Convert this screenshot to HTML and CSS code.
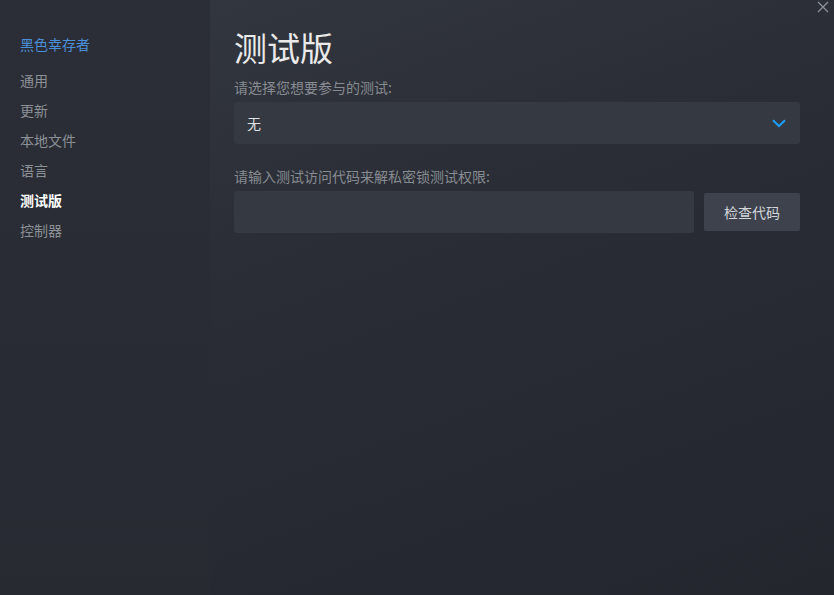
FILE: index.html
```html
<!DOCTYPE html>
<html lang="zh-CN">
<head>
<meta charset="utf-8">
<title>测试版</title>
<link rel="stylesheet" href="styles.css">
</head>
<body>
<div class="window">
  <nav class="sidebar">
    <div class="game-title">黑色幸存者</div>
    <ul class="menu">
      <li class="menu-item">通用</li>
      <li class="menu-item">更新</li>
      <li class="menu-item">本地文件</li>
      <li class="menu-item">语言</li>
      <li class="menu-item active">测试版</li>
      <li class="menu-item">控制器</li>
    </ul>
  </nav>
  <main class="content">
    <h1 class="title">测试版</h1>
    <div class="label">请选择您想要参与的测试:</div>
    <div class="select">
      <span class="select-value">无</span>
      <svg class="chevron" width="14" height="9" viewBox="0 0 14 9"><path d="M1 1.2 L7 7 L13 1.2" fill="none" stroke="#1a9fff" stroke-width="2"/></svg>
    </div>
    <div class="label label-code">请输入测试访问代码来解私密锁测试权限:</div>
    <div class="code-row">
      <div class="code-input"></div>
      <button class="check-btn">检查代码</button>
    </div>
  </main>
  <button class="close" aria-label="关闭">
    <svg width="12" height="12" viewBox="0 0 12 12"><path d="M1 1 L11 11 M11 1 L1 11" stroke="#8b929a" stroke-width="1.3" fill="none"/></svg>
  </button>
</div>
</body>
</html>
```

FILE: styles.css
```css
html, body {
  margin: 0;
  padding: 0;
  height: 100%;
}
body {
  font-family: "Noto Sans CJK SC", "Noto Sans", sans-serif;
  background: #25282f;
}
.window {
  position: relative;
  display: flex;
  width: 834px;
  height: 595px;
  overflow: hidden;
}
.sidebar {
  width: 210px;
  flex: none;
  background: linear-gradient(180deg, #2b2e36 0%, #272a31 100%);
  padding: 33px 0 0 20px;
  box-sizing: border-box;
}
.game-title {
  color: #4a8fd8;
  font-size: 14px;
  line-height: 22px;
  margin-bottom: 14px;
}
.menu {
  list-style: none;
  margin: 0;
  padding: 0;
  display: flex;
  flex-direction: column;
  gap: 8px;
}
.menu-item {
  color: #8c9097;
  font-size: 14px;
  line-height: 22px;
}
.menu-item.active {
  color: #ffffff;
  font-weight: bold;
}
.content {
  flex: 1;
  background: linear-gradient(160deg, #32363e 0%, #2a2d35 35%, #23262d 100%);
  padding: 24px 34px 0 24px;
  box-sizing: border-box;
}
.title {
  margin: 0;
  font-size: 33px;
  font-weight: normal;
  line-height: 46px;
  color: #eaeaea;
}
.label {
  color: #878b92;
  font-size: 14px;
  line-height: 20px;
  margin-top: 7px;
}
.label-code {
  margin-top: 22px;
}
.select {
  margin-top: 5px;
  height: 42px;
  background: #353941;
  border-radius: 3px;
  display: flex;
  align-items: center;
  justify-content: space-between;
  padding: 0 14px 0 13px;
}
.select-value {
  color: #dfe1e4;
  font-size: 14px;
}
.chevron {
  display: block;
}
.code-row {
  margin-top: 5px;
  display: flex;
  align-items: center;
  gap: 10px;
}
.code-input {
  flex: 1;
  height: 42px;
  background: #353941;
  border-radius: 3px;
}
.check-btn {
  width: 96px;
  height: 38px;
  background: #3d424c;
  border: none;
  border-radius: 2px;
  color: #d3d6db;
  font-family: inherit;
  font-size: 14px;
  padding: 0;
}
.close {
  position: absolute;
  top: 1px;
  right: 5px;
  background: none;
  border: none;
  padding: 0;
  width: 12px;
  height: 12px;
}
.close svg {
  display: block;
}
```
